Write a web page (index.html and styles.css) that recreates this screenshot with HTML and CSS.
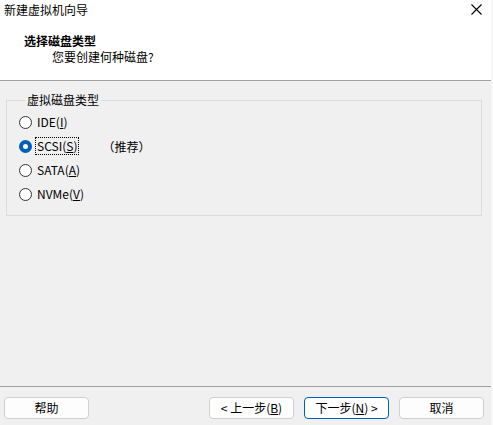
FILE: index.html
```html
<!DOCTYPE html>
<html lang="zh-CN">
<head>
<meta charset="utf-8">
<title>新建虚拟机向导</title>
<link rel="stylesheet" href="styles.css">
</head>
<body>
<div class="window">
  <div class="header">
    <div class="titlebar">
      <span class="title">新建虚拟机向导</span>
      <span class="close"><svg width="11" height="11" viewBox="0 0 11 11"><path d="M0.5 0.5L10.5 10.5M10.5 0.5L0.5 10.5" stroke="#000" stroke-width="1.1" fill="none"/></svg></span>
    </div>
    <div class="heading">选择磁盘类型</div>
    <div class="subheading">您要创建何种磁盘?</div>
  </div>
  <div class="body">
    <fieldset class="group">
      <legend>虚拟磁盘类型</legend>
      <label class="radio"><span class="dot"></span><span class="lbl">IDE(<u>I</u>)</span></label>
      <label class="radio checked"><span class="dot"></span><span class="lbl focus">SCSI(<u>S</u>)</span><span class="note">（推荐）</span></label>
      <label class="radio"><span class="dot"></span><span class="lbl">SATA(<u>A</u>)</span></label>
      <label class="radio"><span class="dot"></span><span class="lbl">NVMe(<u>V</u>)</span></label>
    </fieldset>
  </div>
  <div class="footer">
    <button class="btn">帮助</button>
    <div class="spacer"></div>
    <button class="btn">&lt; 上一步(<u>B</u>)</button>
    <button class="btn primary">下一步(<u>N</u>) &gt;</button>
    <button class="btn">取消</button>
  </div>
</div>
</body>
</html>
```
FILE: styles.css
```css
html, body {
  margin: 0;
  padding: 0;
}
body {
  width: 493px;
  height: 425px;
  background: #f0f0f0;
  font-family: "Noto Sans CJK SC", "Microsoft YaHei", sans-serif;
  font-size: 12px;
  color: #000;
  overflow: hidden;
}
.window {
  display: flex;
  flex-direction: column;
  height: 425px;
  width: 491px;
  border-right: 2px solid #f7f7f7;
}
.header {
  background: #fff;
  height: 80px;
  border-bottom: 1px solid #a0a0a0;
  flex: none;
}
.titlebar {
  height: 28px;
  display: flex;
  align-items: flex-start;
  justify-content: space-between;
  padding: 1px 8px 0 4px;
}
.title {
  line-height: 18px;
}
.close {
  display: flex;
  margin-top: 3px;
  margin-right: 1px;
}
.heading {
  font-weight: bold;
  padding-left: 24px;
  line-height: 16px;
  margin-top: 4px;
}
.subheading {
  padding-left: 52px;
  line-height: 16px;
}
.body {
  flex: 1;
  padding: 12px 9px 0 6px;
  border-bottom: 1px solid #a0a0a0;
}
.group {
  margin: 0;
  border: 1px solid #dcdcdc;
  padding: 3px 0 0 13px;
  height: 123px;
  box-sizing: border-box;
}
.group legend {
  padding: 0 2px;
  margin-left: 5px;
  line-height: 14px;
}
.radio {
  display: flex;
  align-items: center;
  height: 24px;
}
.dot {
  width: 13px;
  height: 13px;
  border: 1px solid #333;
  border-radius: 50%;
  background: #fff;
  box-sizing: border-box;
  margin-right: 3px;
  margin-left: -1px;
  flex: none;
}
.checked .dot {
  border: 4px solid #005fb8;
  background: #fff;
}
.lbl {
  padding: 0 1px;
  line-height: 16px;
  border: 1px dotted transparent;
}
.lbl.focus {
  border-color: #000;
}
.note {
  margin-left: 23px;
}
.footer {
  flex: none;
  height: 38px;
  display: flex;
  align-items: flex-start;
  padding: 10px 7px 0 4px;
  box-sizing: border-box;
  gap: 10px;
}
.spacer {
  flex: 1;
}
.btn {
  width: 85px;
  height: 22px;
  background: #fdfdfd;
  border: 1px solid #d0d0d0;
  border-radius: 4px;
  font-family: inherit;
  font-size: 12px;
  color: #000;
  padding: 0;
  line-height: 18px;
}
.btn.primary {
  border-color: #005fb8;
}
```
